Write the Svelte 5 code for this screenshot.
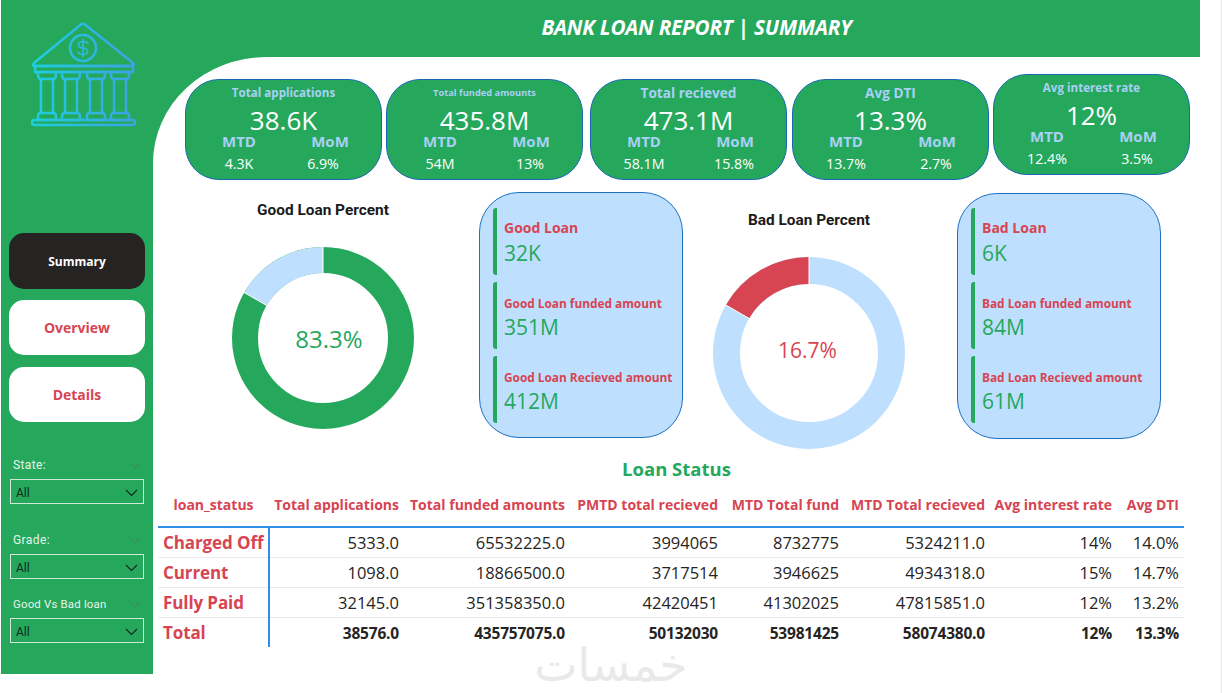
<script>
  const cards = [
    { t: 'Total applications', v: '38.6K', m: '4.3K', o: '6.9%', c: 'md' },
    { t: 'Total funded amounts', v: '435.8M', m: '54M', o: '13%', c: 'sm' },
    { t: 'Total recieved', v: '473.1M', m: '58.1M', o: '15.8%', c: 'lg' },
    { t: 'Avg DTI', v: '13.3%', m: '13.7%', o: '2.7%', c: 'lg' },
    { t: 'Avg interest rate', v: '12%', m: '12.4%', o: '3.5%', c: 'md' }
  ];
  const good = [['Good Loan', '32K'], ['Good Loan funded amount', '351M'], ['Good Loan Recieved amount', '412M']];
  const bad = [['Bad Loan', '6K'], ['Bad Loan funded amount', '84M'], ['Bad Loan Recieved amount', '61M']];
  const heads = ['loan_status', 'Total applications', 'Total funded amounts', 'PMTD total recieved', 'MTD Total fund', 'MTD Total recieved', 'Avg interest rate', 'Avg DTI'];
  const rows = [
    ['Charged Off', '5333.0', '65532225.0', '3994065', '8732775', '5324211.0', '14%', '14.0%'],
    ['Current', '1098.0', '18866500.0', '3717514', '3946625', '4934318.0', '15%', '14.7%'],
    ['Fully Paid', '32145.0', '351358350.0', '42420451', '41302025', '47815851.0', '12%', '13.2%'],
    ['Total', '38576.0', '435757075.0', '50132030', '53981425', '58074380.0', '12%', '13.3%']
  ];
  const widths = [111, 135, 166, 153, 121, 146, 127, 67];
  const filters = ['State:', 'Grade:', 'Good Vs Bad loan'];
</script>

<div class="page">
  <aside class="side">
    <svg class="logo" width="110" height="108" viewBox="0 0 110 108" fill="none">
      <defs>
        <linearGradient id="g" gradientUnits="userSpaceOnUse" x1="0" y1="0" x2="105" y2="0">
          <stop offset="0" stop-color="#1cd0e0" />
          <stop offset="1" stop-color="#3fa0e4" />
        </linearGradient>
      </defs>
      <g stroke="url(#g)" stroke-width="2.5" stroke-linejoin="round" stroke-linecap="round">
        <path d="M3 41 L50 2.5 Q52 1 54 2.5 L102 41 Q104 44 101 44 H4 Q1 44 3 41Z" />
        <circle cx="52" cy="26" r="13" />
        <path d="M57 21.5 Q56 19.5 52 19.5 Q47.5 19.5 47.5 23 Q47.5 26 52 26 Q56.5 26 56.5 29.5 Q56.5 32.5 52 32.5 Q48 32.5 47 30 M52 17.5V34.5" stroke-width="1.6" />
        <path d="M4 44 H102 V50 H4Z" />
        <rect x="1" y="98" width="103" height="5" rx="2.5" />
        {#each [7, 31, 56, 80] as x}
          <path d="M{x} 50 H{x + 18} V53 Q{x + 18} 57 {x + 15} 57 H{x + 3} Q{x} 57 {x} 53Z" />
          <path d="M{x + 3} 57 V91 M{x + 15} 57 V91" />
          <path d="M{x + 3} 91 H{x + 15} Q{x + 18} 91 {x + 18} 94 V98 H{x} V94 Q{x} 91 {x + 3} 91Z" />
        {/each}
      </g>
    </svg>

    <nav class="nav">
      <div class="btn dark">Summary</div>
      <div class="btn">Overview</div>
      <div class="btn">Details</div>
    </nav>

    <div class="filters">
      {#each filters as f}
        <div class="filter">
          <div class="flabel">
            <span>{f}</span>
            <svg width="12" height="7" viewBox="0 0 12 7" fill="none"><path d="M1 1l5 5 5-5" stroke="#4b7f60" stroke-width="1" /></svg>
          </div>
          <div class="fbox">
            <span>All</span>
            <svg width="13" height="8" viewBox="0 0 13 8" fill="none"><path d="M1 1l5.5 5.5L12 1" stroke="#10261a" stroke-width="1.1" /></svg>
          </div>
        </div>
      {/each}
    </div>
  </aside>

  <main class="main">
    <header class="head">BANK LOAN REPORT | SUMMARY</header>
    <div class="content">
      <section class="cards">
        {#each cards as c}
          <article class="card">
            <div class="ctitle {c.c}">{c.t}</div>
            <div class="cval">{c.v}</div>
            <div class="pair lab"><span>MTD</span><span>MoM</span></div>
            <div class="pair sub"><span>{c.m}</span><span>{c.o}</span></div>
          </article>
        {/each}
      </section>

      <section class="mid">
        <div class="chart c1">
          <div class="ctit">Good Loan Percent</div>
          <div class="donut">
            <svg width="184" height="184" viewBox="-92 -92 184 184">
              <circle r="78" fill="none" stroke="#25a85c" stroke-width="26" />
              <path d="M0 -91 A91 91 0 0 0 -78.8 -45.5 L-56.3 -32.5 A65 65 0 0 1 0 -65Z" fill="#bfdffe" />
              <path d="M0 -92V-64M-79.7 -46L-55.4 -32" stroke="#fff" stroke-width="1" />
            </svg>
            <span class="pct green">83.3%</span>
          </div>
        </div>
        <div class="panel">
          {#each good as g}
            <div class="item">
              <div class="ilabel">{g[0]}</div>
              <div class="ival">{g[1]}</div>
            </div>
          {/each}
        </div>
        <div class="chart c2">
          <div class="ctit">Bad Loan Percent</div>
          <div class="donut">
            <svg width="194" height="194" viewBox="-97 -97 194 194">
              <circle r="82.5" fill="none" stroke="#bfdffe" stroke-width="27" />
              <path d="M0 -96 A96 96 0 0 0 -83.1 -48 L-59.8 -34.5 A69 69 0 0 1 0 -69Z" fill="#d74452" />
              <path d="M0 -97V-68M-84 -48.5L-58.9 -34" stroke="#fff" stroke-width="1" />
            </svg>
            <span class="pct red">16.7%</span>
          </div>
        </div>
        <div class="panel p2">
          {#each bad as g}
            <div class="item">
              <div class="ilabel">{g[0]}</div>
              <div class="ival">{g[1]}</div>
            </div>
          {/each}
        </div>
      </section>

      <h2 class="tt">Loan Status</h2>
      <table>
        <colgroup>
          {#each widths as w}<col style="width:{w}px" />{/each}
        </colgroup>
        <thead>
          <tr>{#each heads as h}<th>{h}</th>{/each}</tr>
        </thead>
        <tbody>
          {#each rows as r}
            <tr>{#each r as v}<td>{v}</td>{/each}</tr>
          {/each}
        </tbody>
      </table>
    </div>
  </main>
  <div class="wm" dir="rtl" lang="ar">خمسات</div>
</div>

<style>
  :global(body) { margin: 0; background: #fff; }
  .page {
    width: 1222px; height: 693px; position: relative; overflow: hidden;
    display: flex; align-items: flex-start; background: #fff;
    font-family: "Open Sans", "Noto Sans", sans-serif;
    border-left: 1px solid #fff; border-right: 1px solid #e8e8e8; box-sizing: border-box;
  }
  .side { width: 152px; height: 674px; background: #25a85c; flex: none; display: flex; flex-direction: column; }
  .logo { margin: 22px 0 0 30px; display: block; flex: none; }
  .nav { margin: 103px 0 0 8px; display: flex; flex-direction: column; gap: 11px; }
  .btn {
    width: 136px; height: 55px; background: #fff; border-radius: 15px; color: #d74452;
    font-weight: 700; font-size: 14px; display: flex; align-items: center; justify-content: center;
  }
  .btn:last-child { margin-top: 1px; }
  .btn.dark { background: #252423; color: #fff; height: 56px; font-size: 12px; }
  .filters { margin: 35px 0 0 9px; display: flex; flex-direction: column; }
  .filter { width: 134px; }
  .filter:nth-child(2) { margin-top: 28px; }
  .filter:nth-child(3) { margin-top: 17px; }
  .flabel {
    height: 16px; display: flex; justify-content: space-between; align-items: center; color: #e6f5ec;
    font-family: Roboto, sans-serif; font-size: 12px; letter-spacing: .4px; padding: 0 3px; margin-bottom: 6px;
  }
  .filter:nth-child(3) .flabel { font-size: 11.4px; letter-spacing: .2px; }
  .fbox {
    height: 25px; border: 1.5px solid #cfe8d8; box-sizing: border-box; display: flex; align-items: center;
    justify-content: space-between; padding: 3px 5px 0 5px; font-size: 12px; color: #0e2a1b; font-family: Roboto, sans-serif;
  }
  .main { width: 1047px; height: 674px; background: #25a85c; flex: none; display: flex; flex-direction: column; }
  .head {
    height: 54px; margin-bottom: 3px; flex: none; display: flex; align-items: center; justify-content: center; color: #fff; box-sizing: border-box;
    font-weight: 700; font-style: italic; font-size: 20.7px; padding-left: 40px; letter-spacing: -.2px;
  }
  .content { flex: 1; background: #fff; border-top-left-radius: 114px 106px; min-height: 0; }
  .cards { padding: 17px 0 0 32px; display: flex; gap: 4px; align-items: flex-start; width: 1069px; }
  .card {
    width: 197px; height: 101px; box-sizing: border-box; border: 1px solid #1a68b4; border-radius: 34px; background: #25a85c;
    margin-top: 5px; flex: none; text-align: center; color: #fff;
  }
  .card:nth-child(3) { margin-left: 3px; }
  .card:nth-child(4) { margin-left: 1px; }
  .card:nth-child(5) { margin-top: 0; }
  .ctitle { height: 25px; display: flex; align-items: center; justify-content: center; color: #a9d0f5; font-weight: 700; }
  .ctitle.md { font-size: 11.6px; }
  .ctitle.sm { font-size: 9.3px; }
  .ctitle.lg { font-size: 13.6px; }
  .cval { font-size: 26px; line-height: 26px; margin-top: 2px; }
  .pair { display: flex; padding-left: 8px; }
  .pair span { width: 90px; box-sizing: border-box; }
  .lab { color: #a9d0f5; font-weight: 700; font-size: 15px; line-height: 16px; }
  .lab span:last-child { padding-left: 2px; }
  .sub { font-size: 14.2px; line-height: 20px; margin-top: 5px; }
  .card:first-child .sub span:last-child { padding-right: 12px; }
  .mid { position: relative; display: flex; align-items: flex-start; margin-top: 12px; height: 247px; }
  .chart { flex: none; text-align: center; }
  .c1 { width: 272px; margin-left: 34px; padding-top: 10px; }
  .c2 { width: 218px; margin-left: 17px; padding-top: 20px; }
  .ctit { font-family: Roboto, sans-serif; font-weight: 700; font-size: 15.4px; line-height: 17px; color: #1b1b1b; }
  .donut { position: relative; display: flex; justify-content: center; }
  .donut svg { display: block; }
  .c1 .donut { margin-top: 27px; }
  .c2 .donut { margin-top: 27px; }
  .pct { position: absolute; left: 0; right: 0; top: 50%; transform: translateY(-50%); }
  .c1 .pct { font-size: 24px; padding-left: 12px; }
  .c2 .pct { font-size: 21px; margin-top: -3px; padding-right: 3px; }
  .green { color: #25a85c; }
  .red { color: #d74452; }
  .panel {
    width: 204px; height: 246px; box-sizing: border-box; flex: none; margin-left: 20px; border: 1px solid #1f70c1; border-radius: 40px;
    background: #bfdffe; padding: 15px 0 0 13px; display: flex; flex-direction: column; gap: 7px;
  }
  .p2 { margin-left: 39px; margin-top: 1px; padding-top: 14px; }
  .item { height: 67px; border-left: 4px solid #25a85c; border-radius: 3px; padding-left: 7px; box-sizing: border-box; }
  .ilabel { color: #d74452; font-weight: 700; font-size: 11.85px; line-height: 16px; margin-top: 13px; white-space: nowrap; }
  .item:first-child .ilabel { font-size: 14px; margin-top: 11px; line-height: 18px; }
  .ival { color: #25a85c; font-size: 21px; line-height: 28px; margin-top: 2px; }
  .tt { margin: 17px 0 0; text-align: center; color: #25a85c; font-size: 18.5px; font-weight: 700; line-height: 26px; width: 1047px; }
  table { margin: 4px 0 0 5px; border-collapse: collapse; table-layout: fixed; width: 1026px; }
  th {
    height: 41px; padding: 0 5px 3px 0; text-align: right; color: #d74452; font-size: 14px; font-weight: 700; white-space: nowrap;
    border-bottom: 2px solid #2f8fe6; box-sizing: border-box;
  }
  th:first-child { text-align: center; padding-right: 0; }
  td { height: 30px; padding: 1px 5px 0 0; text-align: right; font-size: 16.5px; color: #252423; box-sizing: border-box; border-bottom: 1px solid #eaeaea; white-space: nowrap; }
  td:first-child { text-align: left; padding-left: 5px; font-weight: 700; color: #d74452; font-size: 17px; border-right: 2px solid #2f8fe6; letter-spacing: -.1px; }
  tr:last-child td { font-weight: 700; border-bottom: none; font-size: 15.5px; letter-spacing: -.2px; }
  tr:last-child td:first-child { font-size: 17px; letter-spacing: -.1px; }
  .wm {
    position: absolute; left: 520px; top: 647px; width: 180px; text-align: center; font-family: "DejaVu Sans", sans-serif;
    font-size: 46px; line-height: 36px; color: #e9e9e9;
  }
</style>
